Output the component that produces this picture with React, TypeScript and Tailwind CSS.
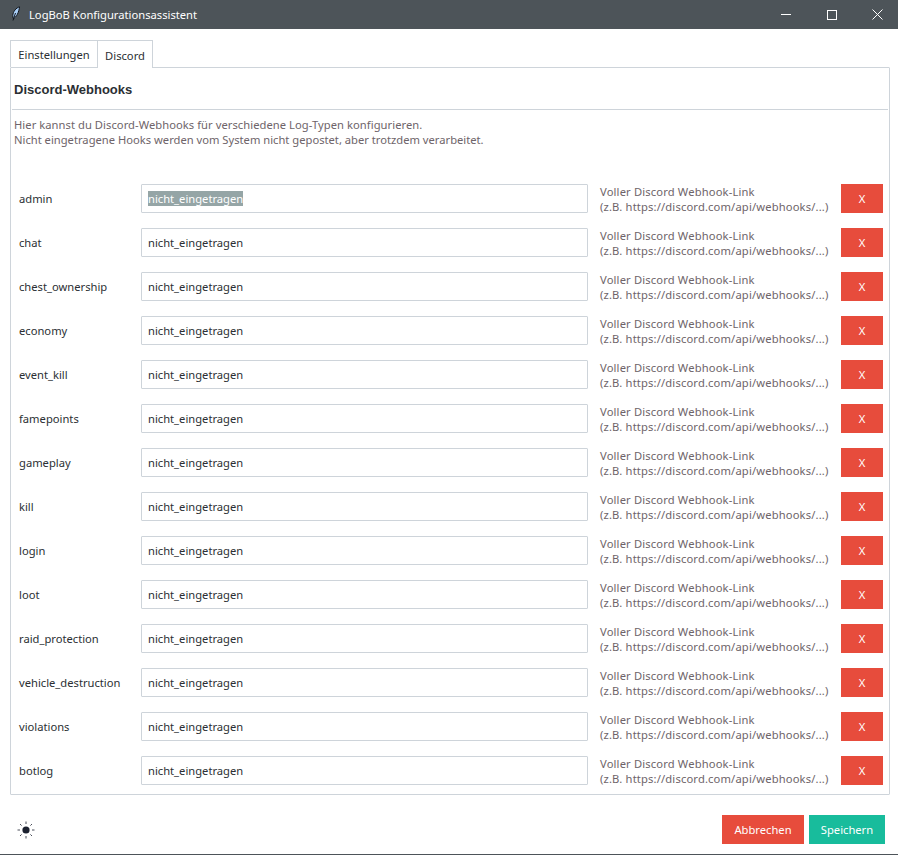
import React from "react";

const hooks = [
  "admin",
  "chat",
  "chest_ownership",
  "economy",
  "event_kill",
  "famepoints",
  "gameplay",
  "kill",
  "login",
  "loot",
  "raid_protection",
  "vehicle_destruction",
  "violations",
  "botlog",
];

const Feather = () => (
  <svg width="10" height="16" viewBox="0 0 10 16" className="shrink-0">
    <path d="M8.5 0.8C5 2 2 5.5 1.8 9.5L2.2 12.5C5.5 11.5 8 6 8.5 0.8Z" fill="#a9cdf5" stroke="#10151c" strokeWidth="1" />
    <path d="M2 14.5L4.5 7" stroke="#10151c" strokeWidth="1" fill="none" />
  </svg>
);

const Sun = () => (
  <svg width="18" height="18" viewBox="0 0 18 18">
    <circle cx="9" cy="9" r="3.6" fill="#1c2130" />
    <path d="M9 0.5V3M9 15V17.5M0.5 9H3M15 9H17.5M3 3L4.6 4.6M13.4 13.4L15 15M15 3L13.4 4.6M4.6 13.4L3 15" stroke="#1c2130" strokeWidth="0.8" fill="none" />
  </svg>
);

const App: React.FC = () => (
  <div className="w-[898px] h-[855px] flex flex-col bg-white overflow-hidden text-[11.2px] leading-[15px] text-[#2b2f33] font-['Noto_Sans','Open_Sans',sans-serif]">
    <div className="h-[29px] shrink-0 bg-[#4d5459] flex items-center text-white">
      <div className="flex items-center gap-[8px] pl-[11px] pb-px">
        <Feather />
        <span>LogBoB Konfigurationsassistent</span>
      </div>
      <div className="ml-auto -mr-[2px] flex items-center h-full">
        <div className="w-[46px] h-full flex items-center justify-center">
          <div className="w-[10px] h-px bg-white" />
        </div>
        <div className="w-[45px] h-full flex items-center justify-center">
          <div className="w-[10px] h-[10px] border border-white" />
        </div>
        <div className="w-[46px] h-full flex items-center justify-center">
          <svg width="11" height="11" viewBox="0 0 11 11">
            <path d="M0.5 0.5L10.5 10.5M10.5 0.5L0.5 10.5" stroke="#fff" strokeWidth="1" />
          </svg>
        </div>
      </div>
    </div>

    <div className="flex-1 flex flex-col pl-[10px] pr-[8px] pt-[11px]">
      <div className="flex h-[28px] -mb-px relative z-10">
        <div className="w-[88px] border border-b-0 border-[#ced4da] flex items-center justify-center mb-px pt-px">Einstellungen</div>
        <div className="w-[56px] -ml-px border border-b-0 border-[#ced4da] bg-white flex items-center justify-center pt-px">Discord</div>
      </div>

      <div className="h-[728px] border border-[#ced4da] rounded-[1px] px-px">
        <div className="h-[42px] flex items-center pl-[2px] pt-px border-b border-[#ced4da]">
          <h2 className="text-[13px] font-bold font-['Liberation_Sans',sans-serif] text-[#2b2f33]">Discord-Webhooks</h2>
        </div>
        <div className="pl-[2px] pt-[7px] text-[#6e6469]">
          <p className="tracking-[0.05px]">Hier kannst du Discord-Webhooks für verschiedene Log-Typen konfigurieren.</p>
          <p>Nicht eingetragene Hooks werden vom System nicht gepostet, aber trotzdem verarbeitet.</p>
        </div>
        <div className="mt-[37px] flex flex-col gap-[15px] pl-[7px]">
          {hooks.map((name, i) => (
            <div key={name} className="flex items-center h-[29px]">
              <div className="w-[122px] shrink-0">{name}</div>
              <div className="w-[447px] h-[29px] shrink-0 border border-[#ced4da] rounded-[1px] flex items-center pl-[6px]">
                {i === 0 ? <span className="bg-[#95a5a6] text-white">nicht_eingetragen</span> : <span>nicht_eingetragen</span>}
              </div>
              <div className="w-[253px] shrink-0 pl-[12px] text-[#6e6469] whitespace-nowrap tracking-[0.15px]">
                <div>Voller Discord Webhook-Link</div>
                <div>(z.B. https://discord.com/api/webhooks/...)</div>
              </div>
              <button className="w-[42px] h-[29px] shrink-0 bg-[#e74c3c] text-white flex items-center justify-center">X</button>
            </div>
          ))}
        </div>
      </div>

      <div className="flex items-center mt-[20px] h-[29px]">
        <div className="pl-[7px] flex items-center">
          <Sun />
        </div>
        <div className="ml-auto flex gap-[5px] pr-[5px]">
          <button className="w-[82px] h-[29px] bg-[#e74c3c] text-white">Abbrechen</button>
          <button className="w-[76px] h-[29px] bg-[#18bc9c] text-white">Speichern</button>
        </div>
      </div>
    </div>
    <div className="h-px shrink-0 bg-[#4d5459]" />
  </div>
);

export default App;
